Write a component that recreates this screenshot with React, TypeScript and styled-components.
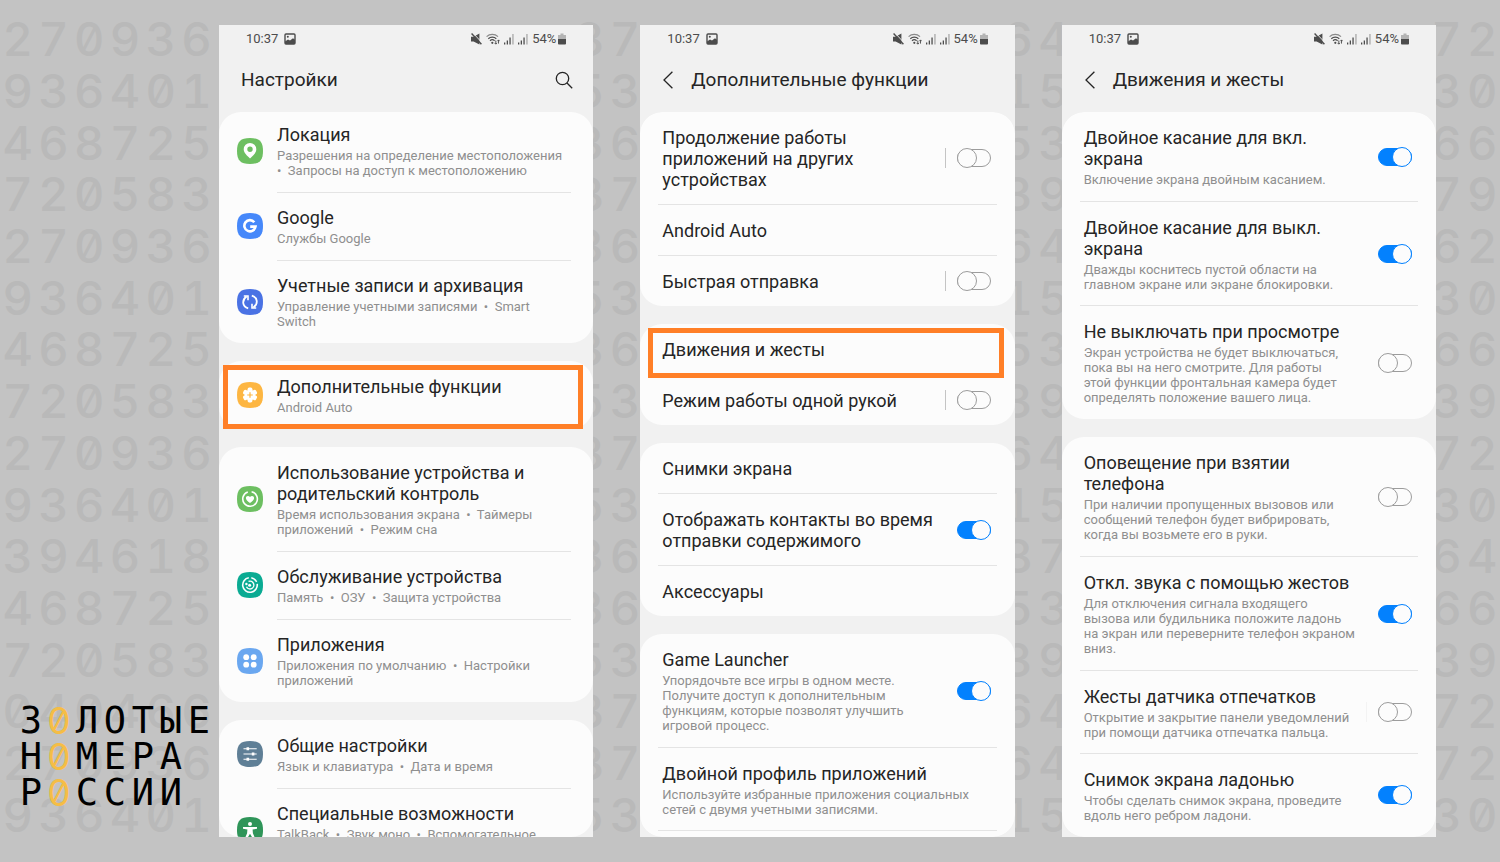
import React from "react";
import styled, { createGlobalStyle, css } from "styled-components";

const GlobalStyle = createGlobalStyle`
  *, *::before, *::after { box-sizing: border-box; }
  body {
    margin: 0;
    background: #c3c3c3;
    font-family: Roboto, "Noto Sans", sans-serif;
    color: #252525;
  }
  a { color: inherit; text-decoration: none; }
`;

/* ---------- page ---------- */

const Stage = styled.div`
  display: grid;
  grid-template: minmax(100vh, auto) / minmax(0, 1fr);
  overflow: hidden;
`;

const Digits = styled.div`
  grid-area: 1 / 1;
  display: grid;
  grid-template-columns: repeat(42, minmax(0, 1fr));
  grid-auto-rows: minmax(0, 1fr);
  padding: 13px 0 22px;
  color: #b9b9b9;
  font: 500 47px/1 Inter, sans-serif;
  font-feature-settings: "zero", "tnum";
  user-select: none;
`;

const Digit = styled.span`
  display: flex;
  align-items: center;
  justify-content: center;
`;

const Content = styled.main`
  grid-area: 1 / 1;
  display: flex;
  padding: 25px 64px 25px 0;
`;

const Side = styled.aside`
  flex: none;
  width: 219px;
  display: flex;
  flex-direction: column;
  justify-content: flex-end;
  padding: 0 0 26px 17px;
`;

const LogoLine = styled.div`
  display: flex;
  color: #000;
  font: 400 37px/36px "DejaVu Sans Mono", monospace;
`;

const LogoLetter = styled.span<{ $accent?: boolean }>`
  width: 28px;
  display: flex;
  justify-content: center;
  ${(p) =>
    p.$accent &&
    css`
      color: #f5bd46;
      font-family: Inter, sans-serif;
      font-feature-settings: "zero";
    `}
`;

const Phones = styled.div`
  flex: 1;
  min-width: 0;
  display: grid;
  grid-template-columns: repeat(3, minmax(0, 1fr));
  gap: 47px;
`;

/* ---------- phone ---------- */

const Phone = styled.section`
  display: flex;
  flex-direction: column;
  height: calc(100vh - 50px);
  background: #f1f1f1;
  overflow: hidden;
`;

const StatusBar = styled.div`
  flex: none;
  display: flex;
  align-items: center;
  justify-content: space-between;
  height: 28px;
  padding: 0 27px;
  color: #4c4c4c;
  font-size: 13px;
  line-height: 16px;
`;

const StatusGroup = styled.div<{ $gap: number }>`
  display: flex;
  align-items: center;
  gap: ${(p) => p.$gap}px;
`;

const Header = styled.header`
  flex: none;
  display: flex;
  align-items: center;
  height: 59px;
  padding: 0 20px 5px 22px;
`;

const HeaderTitle = styled.h1`
  flex: 1;
  margin: 0;
  font-size: 19px;
  line-height: 24px;
  font-weight: 400;
  white-space: nowrap;
`;

const IconButton = styled.button`
  display: flex;
  padding: 0;
  border: 0;
  background: none;
  color: #252525;
`;

const BackButton = styled(IconButton)`
  width: 29px;
`;

const Scroll = styled.div`
  flex: 1;
  min-height: 0;
  display: flex;
  flex-direction: column;
  gap: 18px;
  border-radius: 22px;
  overflow: hidden;
`;

const Card = styled.div<{ $cut?: boolean; $icons?: boolean }>`
  flex: none;
  padding-top: ${(p) => (p.$icons ? 1 : 0)}px;
  margin-top: ${(p) => (p.$cut ? -3 : 0)}px;
  border-radius: 22px;
  background: #fcfcfc;

  &:last-child {
    flex: 1 0 auto;
  }
`;

/* ---------- rows ---------- */

const iconRow = css`
  grid-template-columns: 40px minmax(0, 1fr);
  padding: 0 21px 0 18px;
`;

const plainRow = css`
  grid-template-columns: minmax(0, 1fr) auto;
  padding: 0 24px 0 22px;
`;

const Row = styled.div<{ $icon?: boolean }>`
  position: relative;
  display: grid;
  align-items: center;
  ${(p) => (p.$icon ? iconRow : plainRow)}
`;

const Divider = styled.hr<{ $icon?: boolean }>`
  height: 1px;
  margin: ${(p) => (p.$icon ? "0 22px 0 58px" : "0 18px")};
  border: 0;
  background: #e4e4e4;
`;

const Texts = styled.span<{ $top: number; $bottom: number }>`
  display: flex;
  flex-direction: column;
  gap: 3px;
  padding: ${(p) => p.$top}px 0 ${(p) => p.$bottom}px;
`;

const Title = styled.span`
  font-size: 18px;
  line-height: 21px;
  white-space: pre;
`;

const Sub = styled.span`
  color: #8f8f8f;
  font-size: 13px;
  line-height: 15px;
  white-space: pre;
`;

const Highlight = styled.span<{ $inset: string }>`
  position: absolute;
  inset: ${(p) => p.$inset};
  z-index: 1;
  border: 5px solid #ff7f27;
  pointer-events: none;
`;

const SwitchSlot = styled.span<{ $line?: string }>`
  display: flex;
  align-items: center;
  height: 20px;
  padding-left: 11px;
  border-left: 1px solid ${(p) => p.$line || "transparent"};
`;

const Switch = styled.input`
  appearance: none;
  display: grid;
  align-items: center;
  width: 34px;
  height: 20px;
  margin: 0;

  &::before,
  &::after {
    content: "";
    grid-area: 1 / 1;
    border: 1px solid #9c9c9c;
  }
  &::before {
    height: 18px;
    border-radius: 9px;
  }
  &::after {
    width: 20px;
    height: 20px;
    border-radius: 10px;
    background: #fcfcfc;
  }
  &:checked::before {
    border-color: #0381fe;
    background: #0381fe;
  }
  &:checked::after {
    justify-self: end;
    border-color: #0381fe;
  }
`;

/* ---------- icons ---------- */

const TileSvg = styled.svg`
  margin-bottom: 1px;
`;

const Tile = ({ fill, children }: { fill: string; children: React.ReactNode }) => (
  <TileSvg width="26" height="26" viewBox="0 0 26 26" fill="none" stroke="#fff" strokeWidth="1.6" aria-hidden="true">
    <path
      d="M13 0C22.5 0 26 3.5 26 13S22.5 26 13 26 0 22.5 0 13 3.5 0 13 0Z"
      fill={fill}
      stroke="none"
    />
    {children}
  </TileSvg>
);

const icons = {
  location: (
    <Tile fill="#6dbf61">
      <path
        fill="#fff"
        stroke="none"
        fillRule="evenodd"
        d="M13 5a6.3 6.3 0 0 0-6.3 6.3C6.700 15 10 17.500 13 20.500c3-3 6.300-5.500 6.300-9.200A6.300 6.300 0 0 0 13 5Zm0 3.600a2.700 2.700 0 1 1 0 5.400 2.700 2.700 0 0 1 0-5.400Z"
      />
    </Tile>
  ),
  google: (
    <Tile fill="#4688fa">
      <path strokeWidth="2.600" d="M17.300 9.200A5.600 5.600 0 1 0 18.500 13.600H13.200" />
    </Tile>
  ),
  accounts: (
    <Tile fill="#4a72e4">
      <path strokeWidth="1.800" d="M11.200 19.400C5.200 17.600 4.600 11 9.600 7.600M14.800 6.600c6 1.800 6.600 8.400 1.600 11.800" />
      <path strokeWidth="1.600" d="M6.800 7h4.200v4.200M19.200 19H15v-4.200" />
    </Tile>
  ),
  features: (
    <Tile fill="#fdb642">
      <g fill="#fff" stroke="none">
        <circle cx="13" cy="13" r="5.300" />
        {[0, 60, 120, 180, 240, 300].map((a) => (
          <rect key={a} x="10.600" y="5.600" width="4.800" height="5" rx="1.600" transform={`rotate(${a} 13 13)`} />
        ))}
      </g>
      <path stroke="#fdb642" strokeWidth="1.200" d="M13 10.200v5.600M10.200 13h5.600" />
    </Tile>
  ),
  wellbeing: (
    <Tile fill="#6dbf61">
      <path d="M14.600 5.800a7.300 7.300 0 1 1-3.800.2M7.200 8.500a7.300 7.300 0 0 1 1.300-1.200" />
      <path
        fill="#fff"
        stroke="none"
        d="M13 17c-2.500-1.900-4.100-3.200-4.100-5 0-2.200 2.800-2.800 4.100-.9 1.300-1.900 4.100-1.300 4.100.9 0 1.800-1.600 3.100-4.100 5Z"
      />
    </Tile>
  ),
  care: (
    <Tile fill="#0aab93">
      <path d="M11.800 5.800a7.300 7.300 0 1 0 8.400 6.100M19.600 9.900a7.300 7.300 0 0 0-5.300-4.100" />
      <path strokeWidth="1.400" d="M11.500 9.400a3.900 3.900 0 1 1-2 5.400" />
      <circle cx="9.400" cy="12" r="1.200" fill="#fff" stroke="none" />
      <circle cx="12.600" cy="13.200" r="1.500" fill="#fff" stroke="none" />
    </Tile>
  ),
  apps: (
    <Tile fill="#6aa7f0">
      <g fill="#fff" stroke="none">
        <circle cx="9.200" cy="9.200" r="2.900" />
        <circle cx="16.700" cy="9.200" r="2.900" />
        <circle cx="9.200" cy="16.700" r="2.900" />
        <circle cx="16.700" cy="16.700" r="2.900" />
      </g>
    </Tile>
  ),
  general: (
    <Tile fill="#5f7f96">
      <path strokeWidth="1.100" d="M6.500 7.800h13.200M6.500 13h13.200M6.500 18.200h13.200" />
      <path strokeWidth="3" d="M9.500 7.800h2.600M14.800 13h2.600M9.500 18.200h2.600" />
    </Tile>
  ),
  accessibility: (
    <Tile fill="#2f9559">
      <circle cx="13" cy="7" r="2" fill="#fff" stroke="none" />
      <path
        fill="#fff"
        stroke="none"
        d="M6 10h14v1.800l-4.400.8.300 3.600 2.200 5.200-1.800.8-3.300-5.400-3.300 5.400-1.800-.8 2.200-5.200.3-3.600-4.400-.8Z"
      />
    </Tile>
  ),
};

const PictureIcon = () => (
  <svg width="12" height="12" viewBox="0 0 12 12" aria-hidden="true">
    <rect x="1" y="1" width="10" height="10" rx="1" fill="none" stroke="#4c4c4c" strokeWidth="1.400" />
    <path d="M1 11V8.600l3-2.200 2 1.200 3-2.400 2 1.600V11Z" fill="#4c4c4c" />
    <circle cx="3.800" cy="3.800" r="1" fill="#4c4c4c" />
  </svg>
);

const MuteIcon = () => (
  <svg width="11" height="12" viewBox="0 0 11 12" aria-hidden="true">
    <path d="M0 3.800h2.600L8.400 0.400v11.200L2.600 8.400H0Z" fill="#4c4c4c" />
    <path d="M1.800 0 11 9.600" stroke="#f1f1f1" strokeWidth="1" />
    <path d="M0.600 0.600 10.400 11.200" stroke="#4c4c4c" strokeWidth="1.400" />
  </svg>
);

const WifiIcon = () => (
  <svg width="14" height="12" viewBox="0 0 14 12" fill="none" aria-hidden="true">
    <path d="M0.600 3.600a8.300 8.300 0 0 1 11.400 0" stroke="#8a8a8a" strokeWidth="1.200" />
    <path d="M2.300 5.700a5.800 5.800 0 0 1 8 0M4 7.800a3.300 3.300 0 0 1 4.600 0" stroke="#4c4c4c" strokeWidth="1.200" />
    <circle cx="6.300" cy="9.800" r="1.100" fill="#4c4c4c" />
    <path d="M9.800 7.500v3.500M8.600 9.900 9.800 11.200l1.200-1.300M12.500 10.600V7M11.300 8.200 12.500 6.900l1.200 1.300" stroke="#4c4c4c" strokeWidth="0.900" />
  </svg>
);

const SignalIcon = () => (
  <svg width="10" height="12" viewBox="0 0 10 12" aria-hidden="true">
    <path d="M0 9.500h1.300V11.500H0ZM2.700 7.500H4V11.500H2.700ZM5.400 4.500h1.300V11.500H5.400Z" fill="#4c4c4c" />
    <path d="M8.300 1h1.300v10.500H8.300Z" fill="#a8a8a8" />
  </svg>
);

const BatteryIcon = () => (
  <svg width="8" height="12" viewBox="0 0 8 12" aria-hidden="true">
    <path d="M2.500 0.500h3V2H8v4H0V2h2.500Z" fill="#b4b4b4" />
    <path d="M0 6h8v4.600a.9.900 0 0 1-.9.900H.9a.9.900 0 0 1-.9-.9Z" fill="#4c4c4c" />
  </svg>
);

/* ---------- data ---------- */

type Item = {
  title: string;
  sub?: string;
  icon?: keyof typeof icons;
  on?: boolean;
  line?: string;
  highlight?: string;
};

type Screen = { title: string; cut?: boolean; cards: Item[][] };

const LINE = "#c4c4c4";
const LINE_FAINT = "#f3f3f3";

const screens: Screen[] = [
  {
    title: "Настройки",
    cut: true,
    cards: [
      [
        {
          icon: "location",
          title: "Локация",
          sub: "Разрешения на определение местоположения\n•  Запросы на доступ к местоположению",
        },
        { icon: "google", title: "Google", sub: "Службы Google" },
        {
          icon: "accounts",
          title: "Учетные записи и архивация",
          sub: "Управление учетными записями  •  Smart\nSwitch",
        },
      ],
      [
        {
          icon: "features",
          title: "Дополнительные функции",
          sub: "Android Auto",
          highlight: "3px 10px 0 4px",
        },
      ],
      [
        {
          icon: "wellbeing",
          title: "Использование устройства и\nродительский контроль",
          sub: "Время использования экрана  •  Таймеры\nприложений  •  Режим сна",
        },
        { icon: "care", title: "Обслуживание устройства", sub: "Память  •  ОЗУ  •  Защита устройства" },
        {
          icon: "apps",
          title: "Приложения",
          sub: "Приложения по умолчанию  •  Настройки\nприложений",
        },
      ],
      [
        { icon: "general", title: "Общие настройки", sub: "Язык и клавиатура  •  Дата и время" },
        {
          icon: "accessibility",
          title: "Специальные возможности",
          sub: "TalkBack  •  Звук моно  •  Вспомогательное\nменю",
        },
      ],
    ],
  },
  {
    title: "Дополнительные функции",
    cards: [
      [
        { title: "Продолжение работы\nприложений на других\nустройствах", on: false, line: LINE },
        { title: "Android Auto" },
        { title: "Быстрая отправка", on: false, line: LINE },
      ],
      [
        { title: "Движения и жесты", highlight: "4px 11px -4px 8px" },
        { title: "Режим работы одной рукой", on: false, line: LINE },
      ],
      [
        { title: "Снимки экрана" },
        { title: "Отображать контакты во время\nотправки содержимого", on: true },
        { title: "Аксессуары" },
      ],
      [
        {
          title: "Game Launcher",
          sub: "Упорядочьте все игры в одном месте.\nПолучите доступ к дополнительным\nфункциям, которые позволят улучшить\nигровой процесс.",
          on: true,
        },
        {
          title: "Двойной профиль приложений",
          sub: "Используйте избранные приложения социальных\nсетей с двумя учетными записями.",
        },
        { title: "" },
      ],
    ],
  },
  {
    title: "Движения и жесты",
    cards: [
      [
        { title: "Двойное касание для вкл.\nэкрана", sub: "Включение экрана двойным касанием.", on: true },
        {
          title: "Двойное касание для выкл.\nэкрана",
          sub: "Дважды коснитесь пустой области на\nглавном экране или экране блокировки.",
          on: true,
        },
        {
          title: "Не выключать при просмотре",
          sub: "Экран устройства не будет выключаться,\nпока вы на него смотрите. Для работы\nэтой функции фронтальная камера будет\nопределять положение вашего лица.",
          on: false,
        },
      ],
      [
        {
          title: "Оповещение при взятии\nтелефона",
          sub: "При наличии пропущенных вызовов или\nсообщений телефон будет вибрировать,\nкогда вы возьмете его в руки.",
          on: false,
        },
        {
          title: "Откл. звука с помощью жестов",
          sub: "Для отключения сигнала входящего\nвызова или будильника положите ладонь\nна экран или переверните телефон экраном\nвниз.",
          on: true,
        },
        {
          title: "Жесты датчика отпечатков",
          sub: "Открытие и закрытие панели уведомлений\nпри помощи датчика отпечатка пальца.",
          on: false,
          line: LINE_FAINT,
        },
        {
          title: "Снимок экрана ладонью",
          sub: "Чтобы сделать снимок экрана, проведите\nвдоль него ребром ладони.",
          on: true,
        },
      ],
    ],
  },
];

/* Visible parts of each digit row: left margin, first gap, second gap, right margin. */
const digitRows: [string, string, string, string][] = [
  ["270936", "87", "64", "72"],
  ["936401", "53", "15", "30"],
  ["468725", "36", "53", "66"],
  ["720583", "87", "39", "79"],
  ["270936", "36", "64", "62"],
  ["936401", "53", "15", "30"],
  ["468725", "36", "53", "66"],
  ["720583", "53", "39", "39"],
  ["270936", "87", "64", "72"],
  ["936401", "53", "15", "30"],
  ["394618", "36", "87", "64"],
  ["468725", "36", "53", "66"],
  ["720583", "53", "39", "39"],
  ["040466", "87", "64", "72"],
  ["270936", "87", "64", "72"],
  ["936401", "53", "15", "30"],
];

const gapStarts = [0, 16, 28, 40];

const logo = ["З0ЛОТЫЕ", "Н0МЕРА", "Р0ССИИ"];

/* ---------- components ---------- */

const DigitPattern = () => (
  <Digits aria-hidden="true">
    {digitRows.map((parts, r) =>
      parts.map((part, p) =>
        part.split("").map((d, i) => (
          <Digit key={`${r}-${p}-${i}`} style={{ gridRow: r + 1, gridColumn: gapStarts[p] + i + 1 }}>
            {d}
          </Digit>
        ))
      )
    )}
  </Digits>
);

const SettingRow = ({ item }: { item: Item }) => {
  const hasSwitch = item.on !== undefined;
  const subLines = item.sub ? item.sub.split("\n").length : 0;
  const top = item.icon ? 14 : 15;
  const bottom = !item.icon && subLines === 2 ? 13 : 14;
  return (
    <Row as={hasSwitch ? "label" : "a"} href={hasSwitch ? undefined : "#"} $icon={!!item.icon}>
      {item.icon && icons[item.icon]}
      <Texts $top={top} $bottom={bottom}>
        <Title>{item.title}</Title>
        {item.sub && <Sub>{item.sub}</Sub>}
      </Texts>
      {hasSwitch && (
        <SwitchSlot $line={item.line}>
          <Switch type="checkbox" role="switch" defaultChecked={item.on} />
        </SwitchSlot>
      )}
      {item.highlight && <Highlight $inset={item.highlight} />}
    </Row>
  );
};

const PhoneScreen = ({ screen }: { screen: Screen }) => (
  <Phone>
    <StatusBar>
      <StatusGroup $gap={6}>
        <span>10:37</span>
        <PictureIcon />
      </StatusGroup>
      <StatusGroup $gap={4}>
        <MuteIcon />
        <WifiIcon />
        <SignalIcon />
        <SignalIcon />
        <StatusGroup $gap={2}>
          <span>54%</span>
          <BatteryIcon />
        </StatusGroup>
      </StatusGroup>
    </StatusBar>
    <Header>
      {!screen.cut && (
        <BackButton type="button" aria-label="Назад">
          <svg width="12" height="18" viewBox="0 0 12 18" fill="none" stroke="currentColor" strokeWidth="1.300">
            <path d="M10.400 0.800 2 9l8.400 8.200" />
          </svg>
        </BackButton>
      )}
      <HeaderTitle>{screen.title}</HeaderTitle>
      {screen.cut && (
        <IconButton type="button" aria-label="Поиск">
          <svg width="18" height="18" viewBox="0 0 18 18" fill="none" stroke="currentColor" strokeWidth="1.300">
            <circle cx="7.500" cy="7.500" r="6.200" />
            <path d="m12 12 5.200 5.200" />
          </svg>
        </IconButton>
      )}
    </Header>
    <Scroll>
      {screen.cards.map((items, c) => (
        <Card key={c} $cut={screen.cut && c === 0} $icons={!!items[0].icon}>
          {items.map((item, i) => (
            <React.Fragment key={i}>
              {i > 0 && <Divider $icon={!!item.icon} />}
              {item.title && <SettingRow item={item} />}
            </React.Fragment>
          ))}
        </Card>
      ))}
    </Scroll>
  </Phone>
);

export default function App() {
  return (
    <>
      <GlobalStyle />
      <Stage>
        <DigitPattern />
        <Content>
          <Side aria-label="Золотые номера России">
            {logo.map((line) => (
              <LogoLine key={line}>
                {line.split("").map((ch, i) => (
                  <LogoLetter key={i} $accent={ch === "0"}>
                    {ch}
                  </LogoLetter>
                ))}
              </LogoLine>
            ))}
          </Side>
          <Phones>
            {screens.map((s) => (
              <PhoneScreen key={s.title} screen={s} />
            ))}
          </Phones>
        </Content>
      </Stage>
    </>
  );
}
